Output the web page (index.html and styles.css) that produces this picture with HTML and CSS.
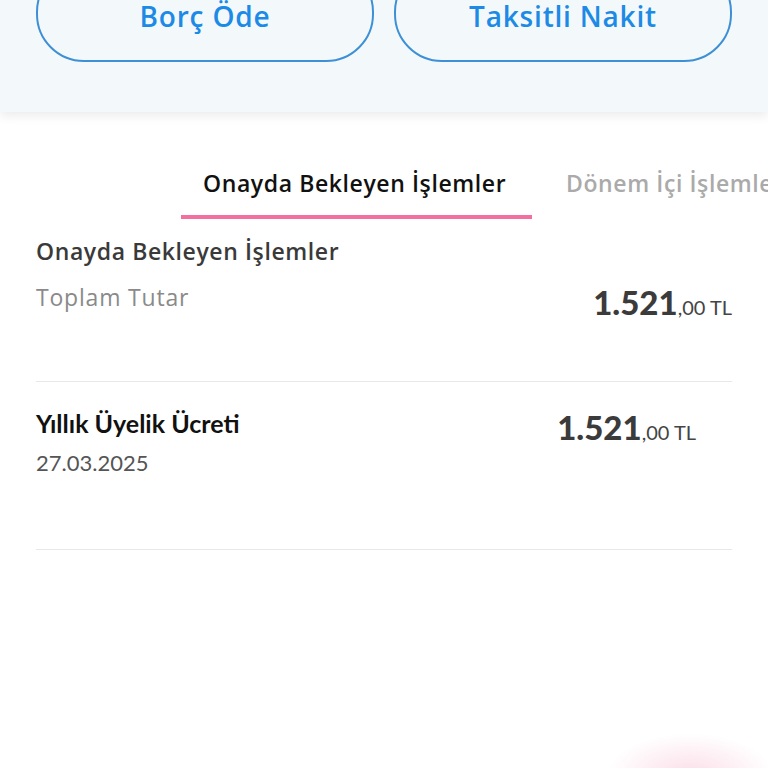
FILE: index.html
```html
<!DOCTYPE html>
<html lang="tr">
  <head>
    <meta charset="UTF-8" />
    <meta name="viewport" content="width=device-width, initial-scale=1.0" />
    <title>Onayda Bekleyen İşlemler</title>
    <link rel="stylesheet" href="styles.css">
  </head>
  <body>
    <!-- Üst butonlar -->
    <section class="actions">
      <button class="action-btn">Borç Öde</button>
      <button class="action-btn">Taksitli Nakit</button>
    </section>

    <nav class="tabs">
      <div class="tab active">Onayda Bekleyen İşlemler</div>
      <div class="tab">Dönem İçi İşlemler</div>
    </nav>

    <section class="summary">
      <h2>Onayda Bekleyen İşlemler</h2>
      <div class="summary-row">
        <span class="label">Toplam Tutar</span>
        <span class="amount"><b>1.521</b>,00 TL</span>
      </div>
    </section>

    <ul class="tx-list">
      <li class="tx">
        <div class="tx-info">
          <div class="tx-name">Yıllık Üyelik Ücreti</div>
          <div class="tx-date">27.03.2025</div>
        </div>
        <span class="amount tx-amount"><b>1.521</b>,00 TL</span>
      </li>
    </ul>

    <div class="fab-glow"></div>
  </body>
</html>
```

FILE: styles.css
```css
* {
  margin: 0;
  padding: 0;
  box-sizing: border-box;
}

html,
body {
  height: 100%;
  overflow: hidden;
}

body {
  font-family: "Open Sans", "Lato", sans-serif;
  background-color: #fff;
  color: #333;
  position: relative;
}

.actions {
  background-color: #f3f9fa;
  height: 112px;
  display: flex;
  gap: 20px;
  padding: 0 36px;
  box-shadow: 0px 4px 10px rgba(0, 0, 0, 0.08);
  align-items: flex-start;
}

.action-btn {
  flex: 1;
  height: 98px;
  margin-top: -36px;
  border: 2px solid #3d8fd6;
  border-radius: 48px;
  background: transparent;
  color: #1d8ae6;
  font-family: "Open Sans", sans-serif;
  font-weight: 600;
  font-size: 28px;
  letter-spacing: 0.8px;
  padding-top: 6px;
}

.tabs {
  display: flex;
  padding-left: 181px;
  margin-top: 56px;
  white-space: nowrap;
}

.tab {
  flex-shrink: 0;
  font-size: 23px;
  letter-spacing: 0.6px;
  line-height: 30px;
  font-weight: 600;
  color: #aaa;
  height: 51px;
}

.tab.active {
  color: #111;
  width: 351px;
  padding-left: 22px;
  border-bottom: 4px solid #f26f9f;
  margin-right: 34px;
}

.summary {
  padding: 17px 36px 0;
}

.summary h2 {
  font-size: 23px;
  letter-spacing: 0.6px;
  line-height: 30px;
  font-weight: 600;
  color: #3a3a3a;
}

.summary-row {
  display: flex;
  justify-content: space-between;
  align-items: flex-start;
  margin-top: 16px;
  padding-bottom: 54px;
  border-bottom: 1px solid #e8e8e8;
}

.label {
  font-size: 23px;
  letter-spacing: 0.8px;
  line-height: 30px;
  color: #8a8a8a;
}

.amount {
  font-family: "Lato", sans-serif;
  font-size: 20px;
  line-height: 40px;
  color: #444;
}

.amount b {
  font-size: 33px;
  font-weight: 900;
  color: #3b3b3b;
}

.tx-list {
  list-style: none;
  padding: 0 36px;
}

.tx {
  display: flex;
  justify-content: space-between;
  align-items: flex-start;
  padding: 25px 0 72px;
  border-bottom: 1px solid #e8e8e8;
}

.tx-name {
  font-family: "Lato", sans-serif;
  font-size: 25px;
  line-height: 32px;
  font-weight: 700;
  color: #111;
}

.tx-date {
  font-family: "Lato", sans-serif;
  font-size: 22px;
  line-height: 28px;
  color: #555;
  margin-top: 10px;
}

.tx-amount {
  margin-right: 36px;
}

.fab-glow {
  position: absolute;
  left: 600px;
  top: 730px;
  width: 180px;
  height: 90px;
  border-radius: 50%;
  background: radial-gradient(ellipse at center, rgba(245, 160, 190, 0.35), rgba(255, 255, 255, 0) 65%);
}
```
